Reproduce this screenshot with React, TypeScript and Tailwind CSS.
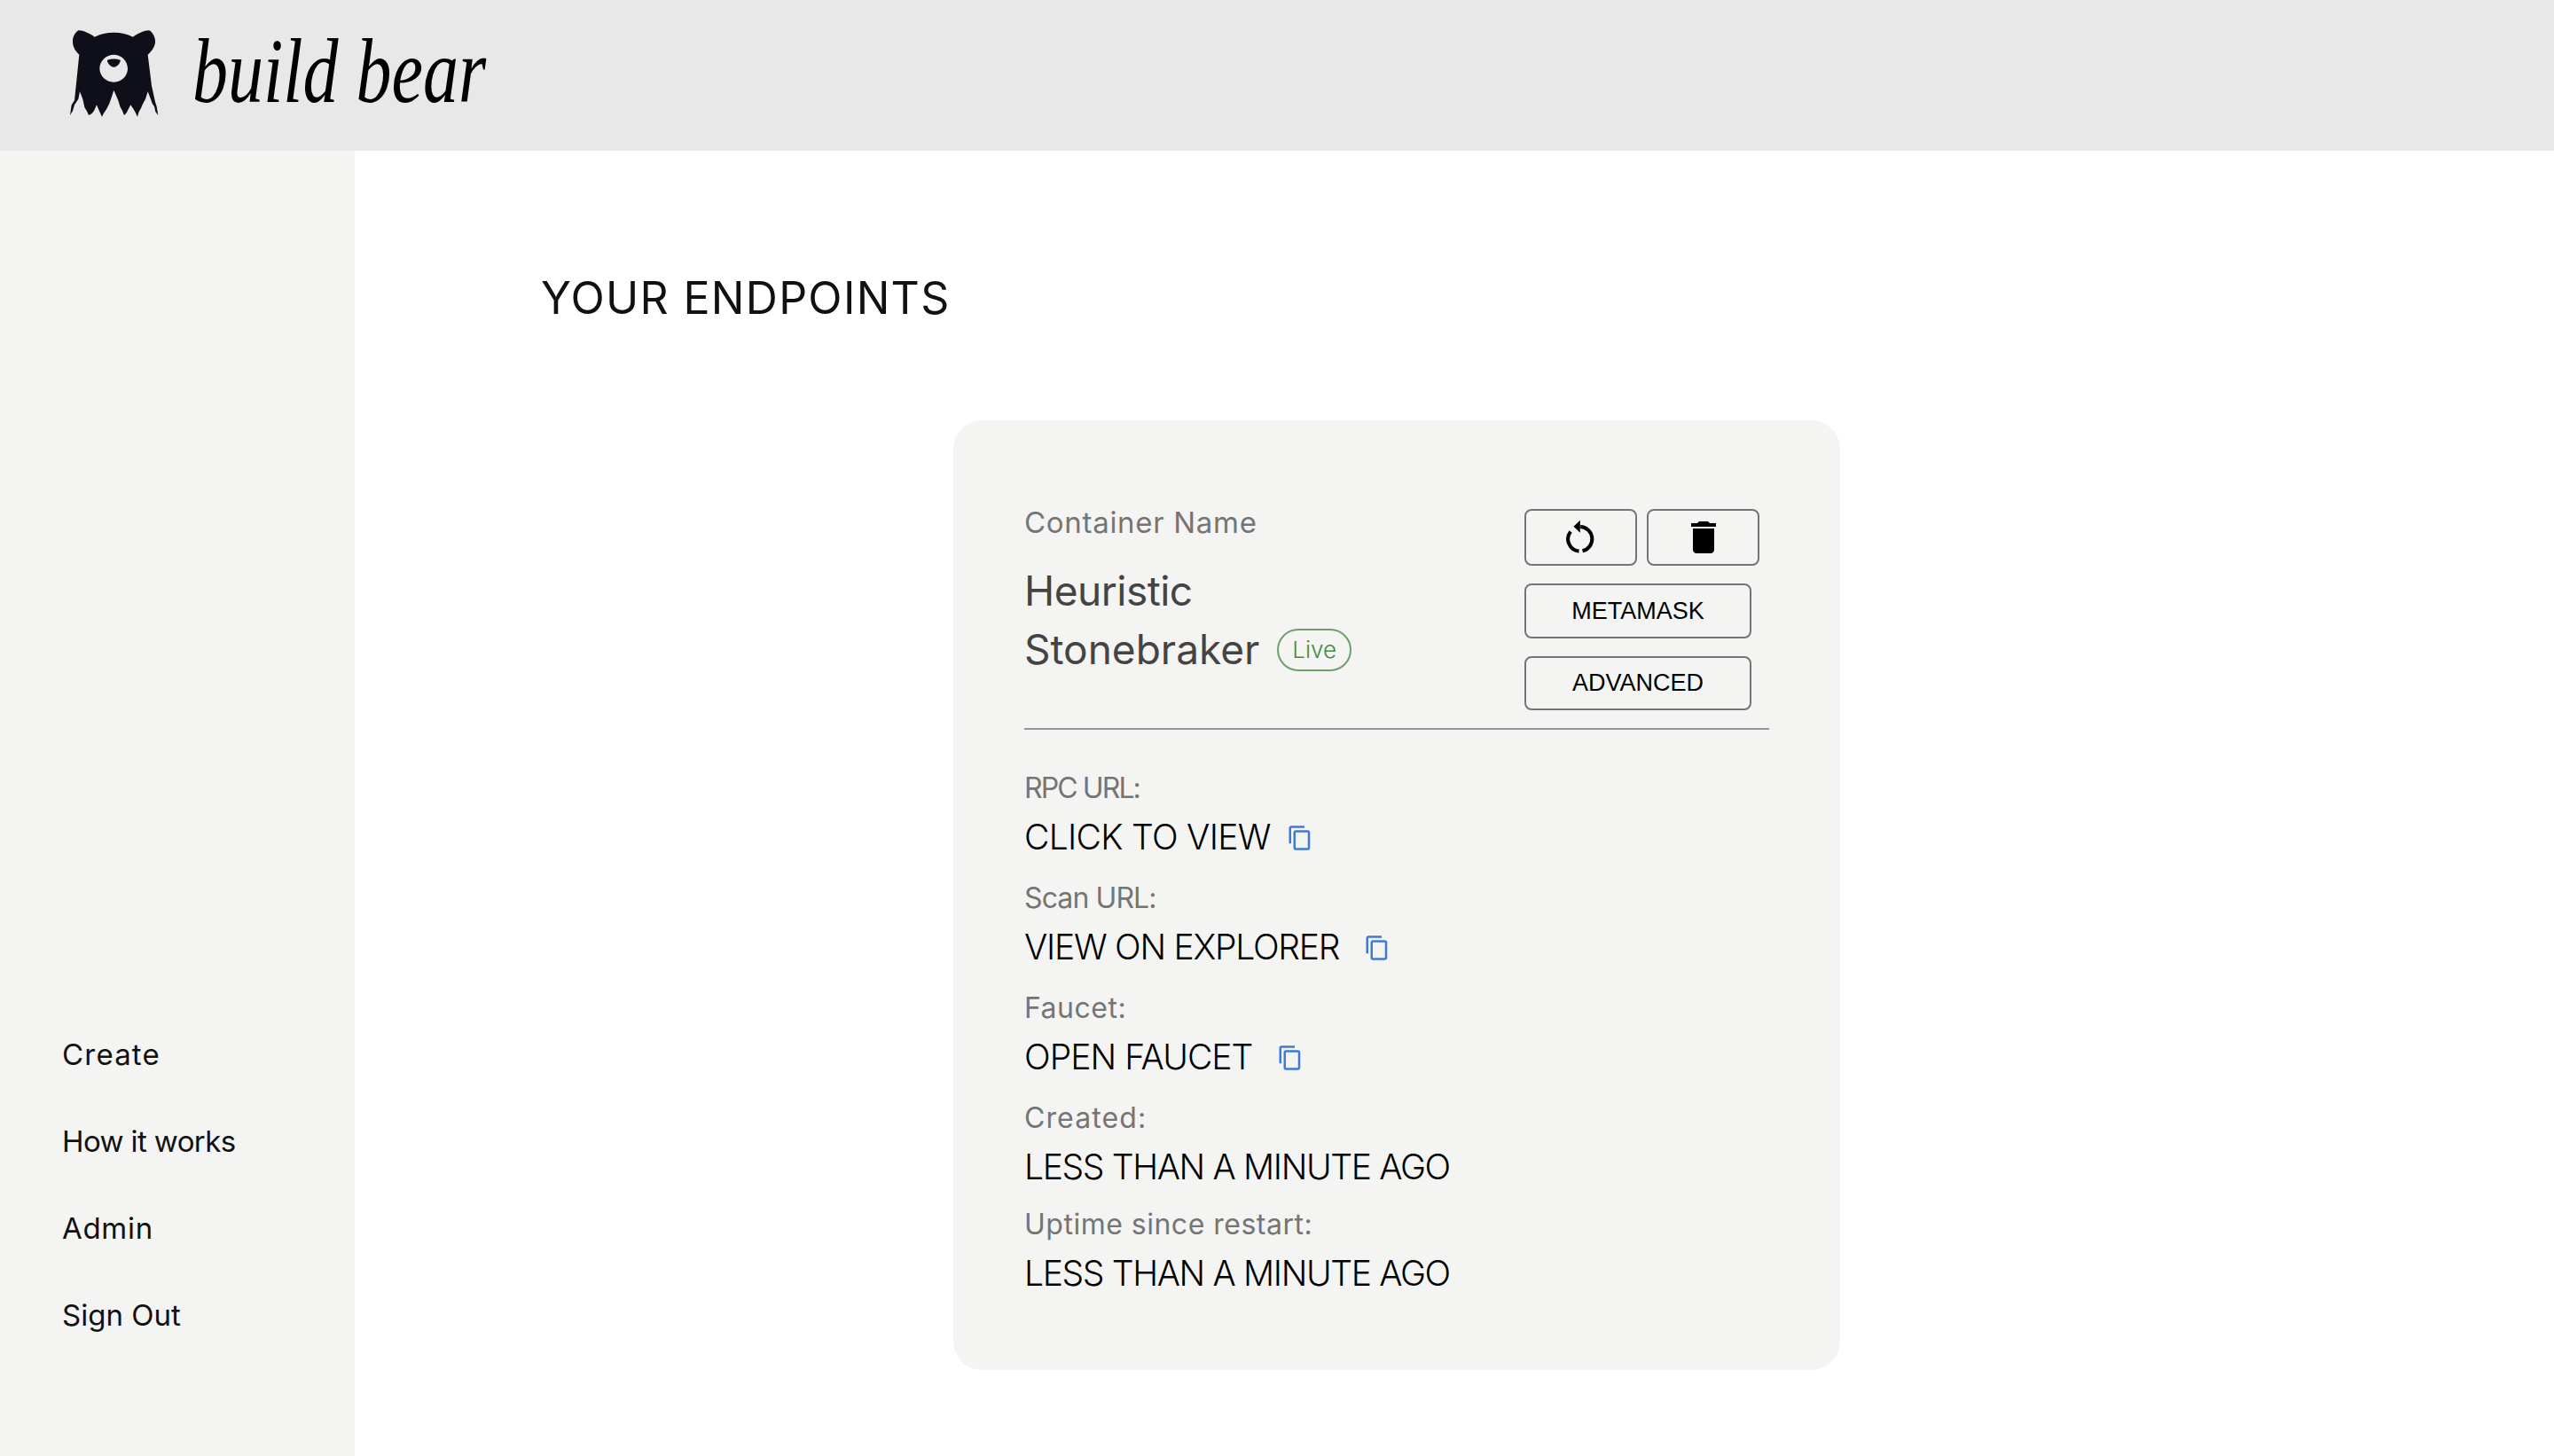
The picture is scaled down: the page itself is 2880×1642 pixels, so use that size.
const font = "font-['Inter','Liberation_Sans',sans-serif]";

function Copy() {
  return (
    <svg viewBox="0 0 24 24" className="w-[30px] h-[30px] shrink-0 fill-[#3f7bd6] mt-[2px]">
      <path d="M16 1H4c-1.1 0-2 .9-2 2v14h2V3h12V1zm3 4H8c-1.1 0-2 .9-2 2v14c0 1.1.9 2 2 2h11c1.1 0 2-.9 2-2V7c0-1.1-.9-2-2-2zm0 16H8V7h11v14z" />
    </svg>
  );
}

function Bear() {
  return (
    <svg viewBox="0 0 420 360" className="w-[140px] h-[120px] shrink-0 -mt-[10px]">
      <path
        fill="#0f0f1a"
        fillRule="evenodd"
        d="M85 43C100 42 122 52 140 65C160 55 180 50 205 50C230 50 250 55 270 65C288 52 310 42 325 43C338 50 347 70 345 85C343 100 332 115 320 125L333 230L345 285L350 300L355 330L346 318L342 300L335 290L330 275L320 250L312 275L303 292L297 306L290 318L285 335L278 320L272 310L262 295L254 310L248 322L240 330L234 315L226 300L220 280L205 245L197 270L190 290L180 310L170 325L165 335L158 320L147 295L138 315L130 325L120 330L115 318L106 303L100 275L90 250L85 275L72 295L66 315L57 330L62 295L72 280L88 125C75 112 66 98 66 80C66 65 74 50 85 43ZM205 125C180 125 157 145 157 172C157 198 180 218 205 218C230 218 252 198 252 172C252 145 230 125 205 125Z"
      />
      <path fill="#0f0f1a" d="M183 143C195 138 215 138 227 143C229 152 215 167 205 167C195 167 181 152 183 143Z" />
    </svg>
  );
}

function Field({ label, value, copy, gap, mb, lt, vt }: { label: string; value: string; copy?: boolean; gap?: string; mb?: string; lt: string; vt: string }) {
  return (
    <div className={mb}>
      <div className={`text-[32px] leading-[48px] text-[#757575] ${lt}`}>{label}</div>
      <div className={`flex items-center h-[60px] text-[39px] leading-[60px] text-black font-[350] pt-[1px] ${gap ?? ""}`}>
        <span className={vt}>{value}</span>
        {copy && <Copy />}
      </div>
    </div>
  );
}

function SideLink({ children, t }: { children: string; t: string }) {
  return <div className={`h-[98px] flex items-center text-[33px] text-[#111] ${t}`}>{children}</div>;
}

export default function App() {
  return (
    <div className={`w-[2880px] h-[1642px] flex flex-col bg-white overflow-hidden ${font}`}>
      <header className="h-[170px] shrink-0 bg-[#e8e8e8] flex items-center pl-[60px] gap-[17px]">
        <Bear />
        <span className="font-['Liberation_Serif',serif] italic text-[80px] leading-none text-black scale-y-[1.3] -mt-[10px]">build bear</span>
      </header>
      <div className="flex flex-1 min-h-0">
        <aside className="w-[400px] shrink-0 bg-[#f4f4f2] flex flex-col justify-end pl-[70px] pb-[109px]">
          <SideLink t="tracking-[1.2px]">Create</SideLink>
          <SideLink t="tracking-[-0.6px]">How it works</SideLink>
          <SideLink t="tracking-[0.7px]">Admin</SideLink>
          <SideLink t="tracking-normal">Sign Out</SideLink>
        </aside>
        <main className="flex-1 pl-[210px] pt-[134px]">
          <h1 className="text-[50px] leading-[64px] tracking-[1.3px] font-normal text-[#111]">YOUR ENDPOINTS</h1>
          <div className="ml-[465px] mt-[106px] w-[1000px] h-[1071px] rounded-[32px] bg-[#f4f4f2] px-[80px] pt-[88px]">
            <div className="flex justify-between h-[259px] border-b-2 border-[#949494] box-content pb-0">
              <div>
                <div className="text-[33px] leading-[50px] text-[#757575] tracking-[0.7px] mt-[2px]">Container Name</div>
                <div className="mt-[20px] text-[46px] leading-[65px] text-[#444] tracking-[-0.5px]">
                  <div>Heuristic</div>
                  <div className="flex items-center gap-[20px] mt-[1px]">
                    <span className="tracking-normal">Stonebraker</span>
                    <span className="h-[48px] px-[15px] rounded-[24px] border-2 border-[#6f9f6f] text-[#3f8a3f] text-[26px] leading-[44px] font-light tracking-normal">Live</span>
                  </div>
                </div>
              </div>
              <div className="w-[276px] font-['Liberation_Sans',sans-serif] text-black mt-[12px]">
                <div className="flex gap-[11px]">
                  <button className="w-[127px] h-[64px] rounded-[8px] border-2 border-[#757575] flex items-center justify-center">
                    <svg viewBox="165 60 110 125" className="w-[37px] h-[42px]">
                      <path d="M226 168A41 41 0 0 0 219 87" fill="none" stroke="black" strokeWidth="12" />
                      <path d="M186 103A41 41 0 0 0 214 169" fill="none" stroke="black" strokeWidth="12" />
                      <path d="M218 65L196 86L218 107Z" fill="black" />
                    </svg>
                  </button>
                  <button className="w-[127px] h-[64px] rounded-[8px] border-2 border-[#757575] flex items-center justify-center">
                    <svg viewBox="0 0 24 24" className="w-[48px] h-[48px] fill-black"><path d="M6 19c0 1.1.9 2 2 2h8c1.1 0 2-.9 2-2V7H6v12zM19 4h-3.5l-1-1h-5l-1 1H5v2h14V4z" /></svg>
                  </button>
                </div>
                <button className="block mt-[20px] w-[256px] h-[62px] rounded-[8px] border-2 border-[#757575] text-[27px]">METAMASK</button>
                <button className="block mt-[20px] w-[256px] h-[61px] rounded-[8px] border-2 border-[#757575] text-[27px]">ADVANCED</button>
              </div>
            </div>
            <div className="pt-[42px]">
              <Field label="RPC URL:" lt="tracking-[-1.9px]" value="CLICK TO VIEW" vt="tracking-[-0.7px]" copy gap="gap-[18px]" mb="mb-[16px]" />
              <Field label="Scan URL:" lt="tracking-[-0.9px]" value="VIEW ON EXPLORER" vt="tracking-[-1.25px]" copy gap="gap-[28px]" mb="mb-[16px]" />
              <Field label="Faucet:" lt="tracking-[0.5px]" value="OPEN FAUCET" vt="tracking-[-0.95px]" copy gap="gap-[28px]" mb="mb-[16px]" />
              <Field label="Created:" lt="tracking-[1.1px]" value="LESS THAN A MINUTE AGO" vt="tracking-[-1.35px]" mb="mb-[12px]" />
              <Field label="Uptime since restart:" lt="tracking-[0.5px]" value="LESS THAN A MINUTE AGO" vt="tracking-[-1.35px]" />
            </div>
          </div>
        </main>
      </div>
    </div>
  );
}
